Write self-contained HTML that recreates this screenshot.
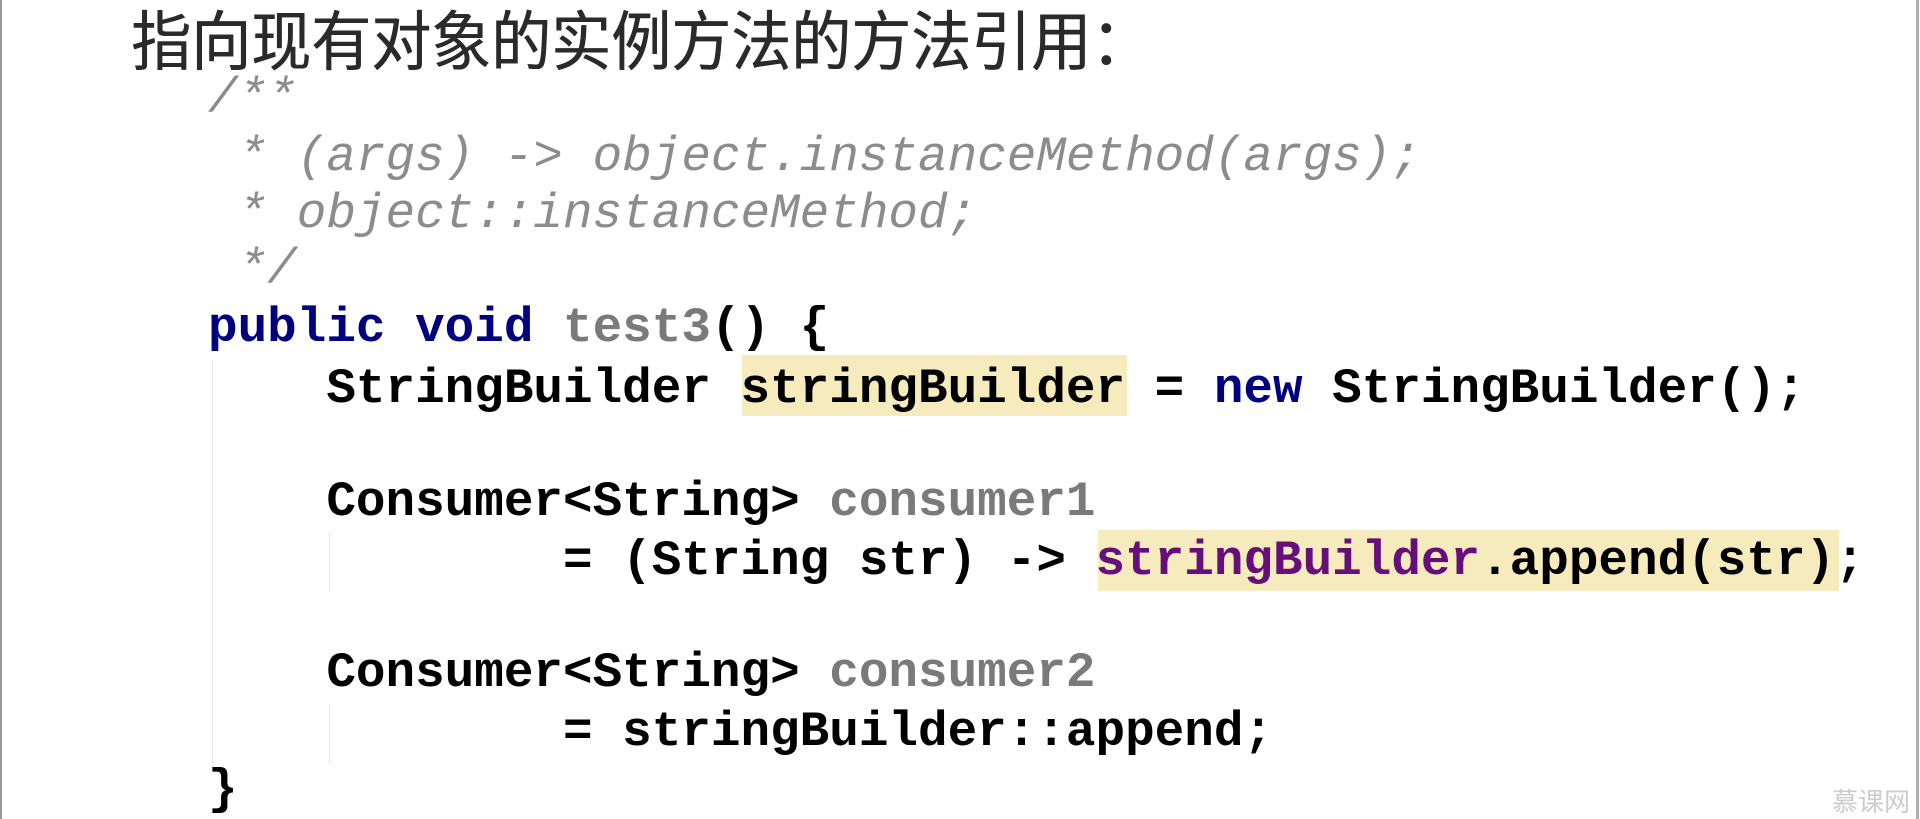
<!DOCTYPE html>
<html><head><meta charset="utf-8"><style>
html,body{margin:0;padding:0;}
body{width:1920px;height:819px;background:#fff;position:relative;overflow:hidden;}
.b{position:absolute;top:0;bottom:0;width:2px;background:#9a9a9a;}
.t{position:absolute;left:131px;top:4px;font-family:"Liberation Sans","Noto Sans CJK SC",sans-serif;font-size:60px;letter-spacing:0px;color:#2a2a2a;line-height:72px;white-space:nowrap;text-shadow:0.6px 0 0 #2a2a2a;transform:scaleY(1.08);transform-origin:0 0;}
.l{position:absolute;left:208px;height:58px;line-height:58px;font-family:"Liberation Mono",monospace;font-size:49.3px;font-weight:bold;color:#000;white-space:pre;}
.c{font-style:italic;font-weight:normal;color:#8c8c8c;}
.k{color:#000080;}
.g{color:#7a7a7a;}
.p{color:#660e7a;}
.h{position:absolute;background:#f6ebbd;}
.v{position:absolute;width:1px;background:#e6e6e6;}
.w{position:absolute;right:10px;bottom:0;font-family:"Noto Sans CJK SC",sans-serif;font-size:26px;color:#ccc;}
</style></head><body>
<div class="b" style="left:0"></div>
<div class="b" style="left:1916px;width:3px;background:#b0b0b0"></div>
<div class="t">指向现有对象的实例方法的方法引用：</div>
<div class="h" style="left:742px;top:355px;width:385px;height:61px"></div>
<div class="h" style="left:1098px;top:530px;width:741px;height:61px"></div>
<div class="v" style="left:212px;top:360px;height:412px"></div>
<div class="v" style="left:329px;top:533px;height:58px"></div>
<div class="v" style="left:329px;top:705px;height:58px"></div>
<div class="l c" style="top:69px">/**</div>
<div class="l c" style="top:128px"> * (args) -&gt; object.instanceMethod(args);</div>
<div class="l c" style="top:185px"> * object::instanceMethod;</div>
<div class="l c" style="top:240px"> */</div>
<div class="l" style="top:299px"><span class="k">public void</span> <span class="g">test3</span>() {</div>
<div class="l" style="top:360px">    StringBuilder stringBuilder = <span class="k">new</span> StringBuilder();</div>
<div class="l" style="top:473px">    Consumer&lt;String&gt; <span class="g">consumer1</span></div>
<div class="l" style="top:532px">            = (String str) -&gt; <span class="p">stringBuilder</span>.append(str);</div>
<div class="l" style="top:644px">    Consumer&lt;String&gt; <span class="g">consumer2</span></div>
<div class="l" style="top:703px">            = stringBuilder::append;</div>
<div class="l" style="top:761px">}</div>
<div class="w">慕课网</div>
</body></html>
